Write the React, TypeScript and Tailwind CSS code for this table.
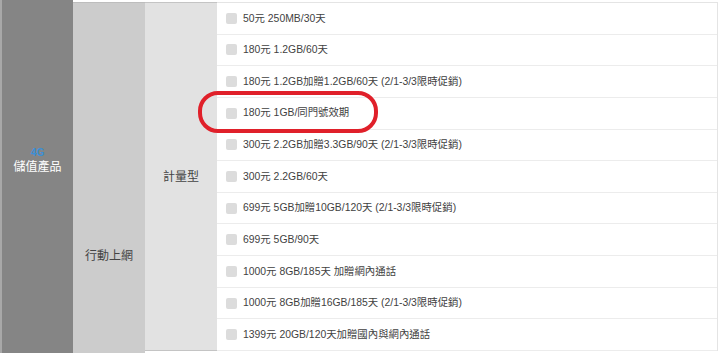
import React from "react";

const plans = [
  "50元 250MB/30天",
  "180元 1.2GB/60天",
  "180元 1.2GB加贈1.2GB/60天 (2/1-3/3限時促銷)",
  "180元 1GB/同門號效期",
  "300元 2.2GB加贈3.3GB/90天 (2/1-3/3限時促銷)",
  "300元 2.2GB/60天",
  "699元 5GB加贈10GB/120天 (2/1-3/3限時促銷)",
  "699元 5GB/90天",
  "1000元 8GB/185天 加贈網內通話",
  "1000元 8GB加贈16GB/185天 (2/1-3/3限時促銷)",
  "1399元 20GB/120天加贈國內與網內通話",
];

function PlanRow({ label }: { label: string }) {
  return (
    <label className="flex h-[31.7px] items-center border-b border-[#ececec] pl-[9px]">
      <span className="mr-[6px] h-[11px] w-[11px] rounded-[2px] bg-[#dcdcdc]" />
      <span className="text-[10.4px] text-[#3f3f3f]">{label}</span>
    </label>
  );
}

function App() {
  return (
    <div
      className="relative flex h-[353px] w-[720px] overflow-hidden bg-white"
      style={{ fontFamily: '"Liberation Sans", "Noto Sans CJK TC", sans-serif' }}
    >
      <div className="flex w-[73px] flex-col items-center border-l-2 border-[#a8a8a8] bg-[#858585] pt-[146px]">
        <span className="text-[10px] font-bold leading-[13px] text-[#3a8fd8]">4G</span>
        <span className="text-[12px] leading-[16px] text-white">儲值產品</span>
      </div>

      <div className="mt-[2px] flex w-[72px] justify-center border-t border-[#bdbdbd] bg-[#cccccc] pt-[245px]">
        <span className="text-[12px] leading-[16px] text-[#444]">行動上網</span>
      </div>

      <div className="mt-[2px] flex h-[349px] w-[72px] items-center justify-center border-y border-[#c4c4c4] bg-[#e2e2e2]">
        <span className="text-[12px] text-[#444]">計量型</span>
      </div>

      <div className="mt-[2px] mr-[2px] flex h-[349px] flex-1 flex-col border-t border-r border-[#e4e4e4]">
        {plans.map((p) => (
          <PlanRow key={p} label={p} />
        ))}
      </div>

      <div className="pointer-events-none absolute left-[198px] top-[91px] h-[42px] w-[180px] rounded-[20px] border-[4px] border-[#e0202a]" />
    </div>
  );
}

export default App;
